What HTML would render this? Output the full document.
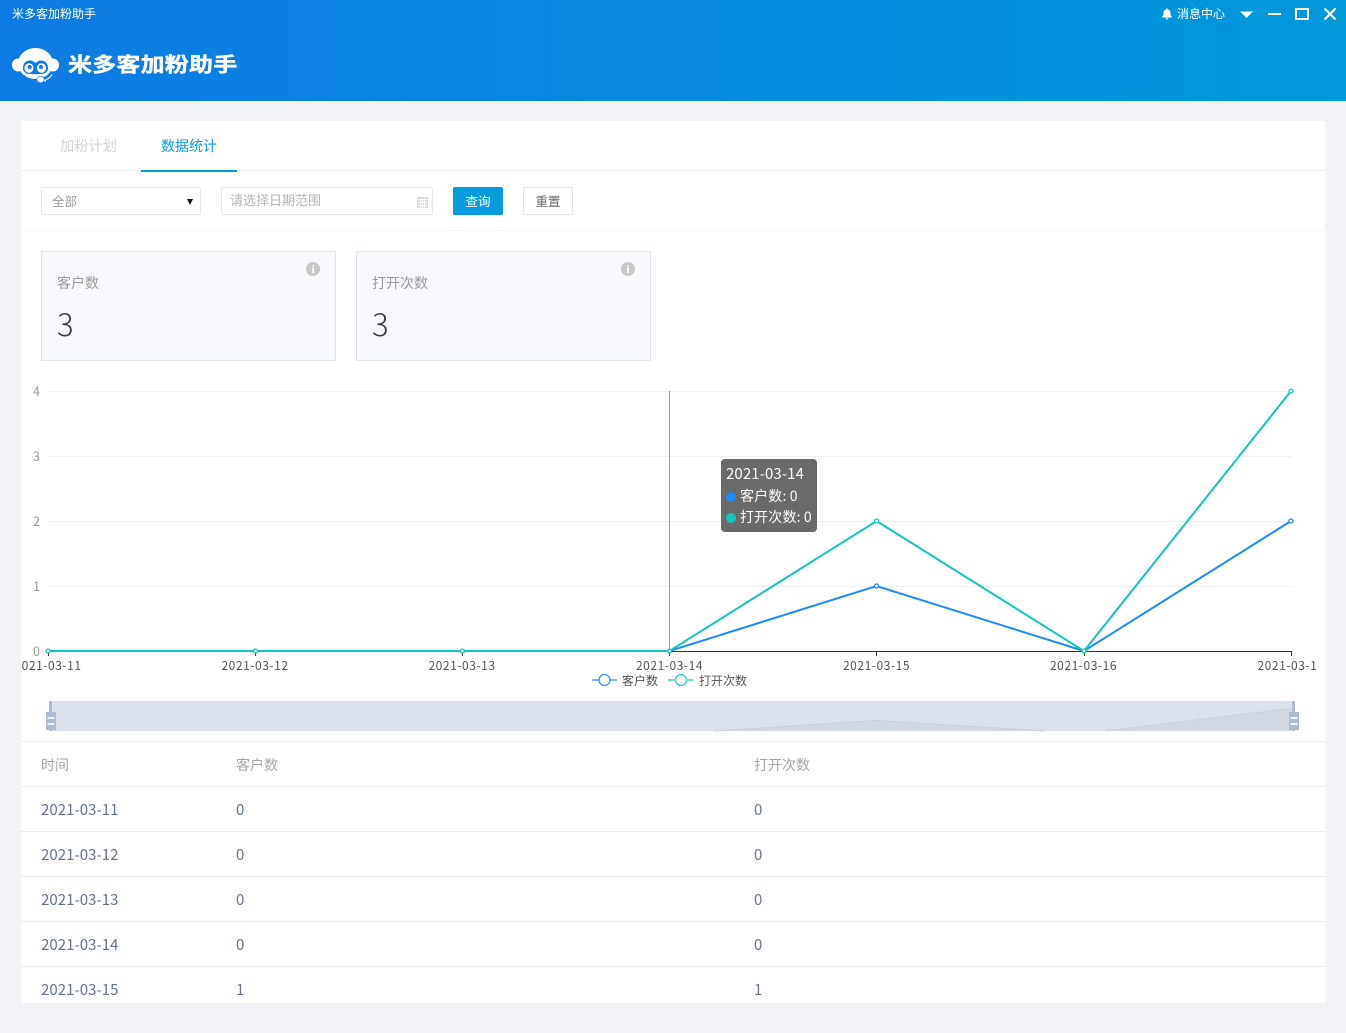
<!DOCTYPE html>
<html lang="zh"><head><meta charset="utf-8"><title>米多客加粉助手</title>
<style>
*{box-sizing:border-box}
html,body{margin:0;padding:0;width:1346px;height:1033px;overflow:hidden;background:#f1f3f6;font-family:"Liberation Sans","Noto Sans CJK SC",sans-serif}
.a{position:absolute;white-space:nowrap}
.cjk{font-family:"Noto Sans CJK SC","Liberation Sans",sans-serif}
#head{left:0;top:0;width:1346px;height:101px;background:linear-gradient(90deg,#0e7ae3,#0099da)}
#card{left:21px;top:121px;width:1304px;height:882px;background:#fff;overflow:hidden}
.line{position:absolute;left:21px;width:1304px;height:1px;background:#ebedf0}
.stat{width:295px;height:110px;top:251px;background:#f8f9fd;border:1px solid #e1e4eb}
.td{font-family:"Noto Sans CJK SC","Liberation Sans",sans-serif;font-size:15px;color:#65748a;letter-spacing:.05px;line-height:20px}
.th{font-family:"Noto Sans CJK SC","Liberation Sans",sans-serif;font-size:14px;color:#a5a5a5;line-height:20px}
.info{width:14px;height:14px;border-radius:50%;background:#c8c8c8;top:262px;color:#fff;font:bold 12px/14px "Liberation Serif",serif;text-align:center}
</style></head><body>
<div class="a" id="head"></div>
<div class="a cjk" style="left:12px;top:5px;font-size:12px;line-height:17px;color:#fff">米多客加粉助手</div>

<svg class="a" style="left:8px;top:44px" width="56" height="42" viewBox="0 0 56 42">
<ellipse cx="10" cy="21" rx="6" ry="6.500" fill="#fff"/><ellipse cx="45" cy="21" rx="6" ry="6.500" fill="#fff"/>
<ellipse cx="27.500" cy="19.500" rx="17.500" ry="15.500" fill="#fff"/>
<path fill="#0e7ae3" d="M15 24c0-4.500 2.800-7.500 6.800-7.500 2.400 0 4.200 1 5.700 2.500 1.500-1.500 3.300-2.500 5.700-2.500 4 0 6.800 3 6.800 7.500 0 3-1.800 5.200-4.500 5.700-2 .300-4 .500-8 .500s-6-.200-8-.500c-2.700-.500-4.500-2.700-4.500-5.700z"/>
<ellipse cx="21" cy="24" rx="4.500" ry="4.800" fill="#fff"/><ellipse cx="33.500" cy="24" rx="4.500" ry="4.800" fill="#fff"/>
<circle cx="21.800" cy="23" r="2" fill="#0e7ae3"/><circle cx="33" cy="23" r="2" fill="#0e7ae3"/>
<path d="M35 36.500c4-.500 7-2.500 9-6" fill="none" stroke="#fff" stroke-width="1.200"/>
<rect x="32" y="35.500" width="6" height="2" fill="#fff"/>
<ellipse cx="32.500" cy="35.500" rx="3.700" ry="3.300" fill="#fff" stroke="#0e7ae3" stroke-width=".6"/>
</svg>
<div class="a cjk" style="left:68px;top:46px;font-size:24px;line-height:34px;font-weight:700;color:#fff;letter-spacing:.2px;-webkit-text-stroke:.5px #fff;width:172px;overflow:hidden;transform:scaleY(.84);transform-origin:50% 50%">米多客加粉助手</div>

<svg class="a" style="left:1161px;top:8px" width="12" height="12" viewBox="0 0 12 12"><path fill="#fff" d="M6 0.500c.6 0 1 .4 1 .9 1.600.5 2.500 1.700 2.500 3.400V7l1.200 1.800v.7H1.300v-.7L2.500 7V4.800C2.500 3.100 3.400 1.900 5 1.400c0-.5.400-.9 1-.9zM4.700 10.200h2.600C7.200 11 6.700 11.500 6 11.500S4.800 11 4.700 10.200z"/></svg>
<div class="a cjk" style="left:1177px;top:5px;font-size:12px;line-height:17px;color:#fff">消息中心</div>
<svg class="a" style="left:1240px;top:11px" width="13" height="8" viewBox="0 0 13 8"><path fill="#fff" d="M0 .5h13L6.500 7z"/></svg>
<div class="a" style="left:1268px;top:13px;width:13px;height:2px;background:#fff"></div>
<div class="a" style="left:1295px;top:8px;width:14px;height:12px;border:2px solid #fff"></div>
<svg class="a" style="left:1323px;top:7px" width="14" height="14" viewBox="0 0 14 14"><path d="M1.500 1.500l11 11M12.500 1.500l-11 11" stroke="#fff" stroke-width="2.200" fill="none"/></svg>

<div class="a" id="card"></div>
<div class="a cjk" style="left:60px;top:136px;font-size:14.200px;line-height:20px;color:#d2d2d2">加粉计划</div>
<div class="a cjk" style="left:161px;top:136px;font-size:14px;line-height:20px;color:#049cdc">数据统计</div>
<div class="line" style="top:170px;background:#ebedf2"></div>
<div class="a" style="left:141px;top:170px;width:96px;height:2px;background:#049cdc"></div>

<div class="a" style="left:41px;top:187px;width:160px;height:28px;border:1px solid #e6e8ee;border-radius:2px;background:#fff"></div>
<div class="a cjk" style="left:52px;top:191px;font-size:12.500px;line-height:19px;color:#9b9b9b">全部</div>
<svg class="a" style="left:187px;top:199px" width="6" height="6" viewBox="0 0 6 6"><path d="M0 0h6L3 6z" fill="#111"/></svg>
<div class="a" style="left:221px;top:187px;width:212px;height:28px;border:1px solid #e6e8ee;border-radius:2px;background:#fff"></div>
<div class="a cjk" style="left:230px;top:190px;font-size:13px;line-height:20px;color:#b5b5b5">请选择日期范围</div>
<svg class="a" style="left:417px;top:196px" width="11" height="12" viewBox="0 0 11 12"><path fill="#dcdcdc" d="M0 1h11v11H0z"/><path stroke="#fff" stroke-width="1" fill="none" d="M1 3.500h9M1 6.500h9M1 9.500h9M3.500 3.500v8M5.500 3.500v8M7.500 3.500v8"/></svg>
<div class="a cjk" style="left:453px;top:187px;width:50px;height:28px;background:#049cdc;border-radius:2px;color:#fff;font-size:12.500px;line-height:28px;text-align:center">查询</div>
<div class="a cjk" style="left:523px;top:187px;width:50px;height:28px;background:#fff;border:1px solid #e2e4ea;border-radius:2px;color:#666;font-size:12.500px;line-height:26px;text-align:center">重置</div>
<div class="line" style="top:230px;background:#f4f5f8"></div>

<div class="a stat" style="left:41px"></div>
<div class="a stat" style="left:356px"></div>
<div class="a info" style="left:306px">i</div>
<div class="a info" style="left:621px">i</div>
<div class="a cjk" style="left:57px;top:273px;font-size:14px;line-height:20px;color:#999">客户数</div>
<div class="a cjk" style="left:372px;top:273px;font-size:14px;line-height:20px;color:#999">打开次数</div>
<div class="a cjk" style="left:57px;top:304px;font-size:31px;line-height:38px;font-weight:300;color:#3a3a3a">3</div>
<div class="a cjk" style="left:372px;top:304px;font-size:31px;line-height:38px;font-weight:300;color:#3a3a3a">3</div>

<svg class="a" style="left:21px;top:375px" width="1304" height="366" viewBox="21 375 1304 366" font-family="'Noto Sans CJK SC','Liberation Sans',sans-serif">
<g stroke="#efeff5" stroke-width="1"><path d="M48 391.500H1292M48 456.500H1292M48 521.500H1292M48 586.500H1292"/></g>
<path d="M48 651.500H1291.500" stroke="#333" stroke-width="1"/>
<path d="M48.500 651v5M255.500 651v5M462.500 651v5M669.500 651v5M876.500 651v5M1084.500 651v5M1291.500 651v5" stroke="#333"/>
<path d="M669.500 391V651" stroke="#999"/>
<g font-size="12.500" fill="#999" text-anchor="end"><text x="40" y="396">4</text><text x="40" y="461">3</text><text x="40" y="526">2</text><text x="40" y="591">1</text><text x="40" y="656">0</text></g>
<g font-size="12" fill="#555" text-anchor="middle" letter-spacing=".55">
<text x="48" y="670" clip-path="url(#c)">2021-03-11</text><text x="255" y="670">2021-03-12</text><text x="462" y="670">2021-03-13</text><text x="669.500" y="670">2021-03-14</text><text x="876.500" y="670">2021-03-15</text><text x="1083.500" y="670">2021-03-16</text><text x="1291" y="670" clip-path="url(#c)">2021-03-17</text></g>
<defs><clipPath id="c"><rect x="22" y="640" width="1295" height="40"/></clipPath></defs>
<polyline fill="none" stroke="#1e8bfb" stroke-width="2" points="48,651 255.500,651 462.500,651 669.500,651 876.500,586 1084,651 1291,521"/>
<polyline fill="none" stroke="#13c6bd" stroke-width="2" points="48,651 255.500,651 462.500,651 669.500,651 876.500,521 1084,651 1291,391"/>
<g fill="#fff" stroke="#1e8bfb" stroke-width="1.300"><circle cx="876.500" cy="586" r="2"/><circle cx="1291" cy="521" r="2"/></g>
<g fill="#fff" stroke="#13c6bd" stroke-width="1.300"><circle cx="48" cy="651" r="2"/><circle cx="255.500" cy="651" r="2"/><circle cx="462.500" cy="651" r="2"/><circle cx="669.500" cy="651" r="2"/><circle cx="876.500" cy="521" r="2"/><circle cx="1084" cy="651" r="2"/><circle cx="1291" cy="391" r="2"/></g>
<path d="M592 680h25" stroke="#1e8bfb" stroke-opacity=".6" stroke-width="2"/><circle cx="604.500" cy="680" r="5.500" fill="#fff" stroke="#3d97f8" stroke-width="1.300"/>
<text x="622" y="685" font-size="12" fill="#555">客户数</text>
<path d="M668 680h25" stroke="#13c6bd" stroke-opacity=".6" stroke-width="2"/><circle cx="681" cy="680" r="5.500" fill="#fff" stroke="#2fcfc6" stroke-width="1.300"/>
<text x="699" y="685" font-size="12" fill="#555">打开次数</text>
<rect x="50" y="701" width="1244" height="30" fill="#dbe1ea"/>
<path d="M714 731L876.500 720.500L1045 731zM1106 731L1291 708.500L1294 708V731z" fill="#d2d8e2"/>
<path d="M714 731L876.500 720.500L1045 731M1106 731L1291 708.500" fill="none" stroke="#c9cfd9"/>
<g fill="#aebcd1"><rect x="49" y="701" width="3" height="30"/><rect x="46" y="712" width="10" height="18"/><rect x="1292" y="701" width="3" height="30"/><rect x="1289" y="712" width="10" height="18"/></g>
<g fill="#eef1f6"><rect x="47.500" y="717" width="7" height="2"/><rect x="47.500" y="723" width="7" height="2"/><rect x="1290.500" y="717" width="7" height="2"/><rect x="1290.500" y="723" width="7" height="2"/></g>
</svg>

<div class="a" style="left:721px;top:459px;width:96px;height:73px;background:rgba(90,90,90,.9);border-radius:4px"></div>
<div class="a cjk" style="left:726px;top:464px;font-size:15px;line-height:20px;letter-spacing:.1px;color:#fff">2021-03-14</div>
<div class="a" style="left:726px;top:491.500px;width:10px;height:10px;border-radius:50%;background:#1e8bfb"></div>
<div class="a cjk" style="left:740px;top:486px;font-size:14px;line-height:20px;letter-spacing:.15px;color:#fff">客户数: 0</div>
<div class="a" style="left:726px;top:512.500px;width:10px;height:10px;border-radius:50%;background:#13c6bd"></div>
<div class="a cjk" style="left:740px;top:507px;font-size:14px;line-height:20px;letter-spacing:.15px;color:#fff">打开次数: 0</div>

<div class="line" style="top:741px"></div>
<div class="a th" style="left:41px;top:755px">时间</div>
<div class="a th" style="left:236px;top:755px">客户数</div>
<div class="a th" style="left:754px;top:755px">打开次数</div>
<div class="line" style="top:786px"></div>
<div class="line" style="top:831px"></div>
<div class="line" style="top:876px"></div>
<div class="line" style="top:921px"></div>
<div class="line" style="top:966px"></div>
<div class="a td" style="left:41px;top:800px">2021-03-11</div><div class="a td" style="left:236px;top:800px">0</div><div class="a td" style="left:754px;top:800px">0</div>
<div class="a td" style="left:41px;top:845px">2021-03-12</div><div class="a td" style="left:236px;top:845px">0</div><div class="a td" style="left:754px;top:845px">0</div>
<div class="a td" style="left:41px;top:890px">2021-03-13</div><div class="a td" style="left:236px;top:890px">0</div><div class="a td" style="left:754px;top:890px">0</div>
<div class="a td" style="left:41px;top:935px">2021-03-14</div><div class="a td" style="left:236px;top:935px">0</div><div class="a td" style="left:754px;top:935px">0</div>
<div class="a td" style="left:41px;top:980px">2021-03-15</div><div class="a td" style="left:236px;top:980px">1</div><div class="a td" style="left:754px;top:980px">1</div>
</body></html>
